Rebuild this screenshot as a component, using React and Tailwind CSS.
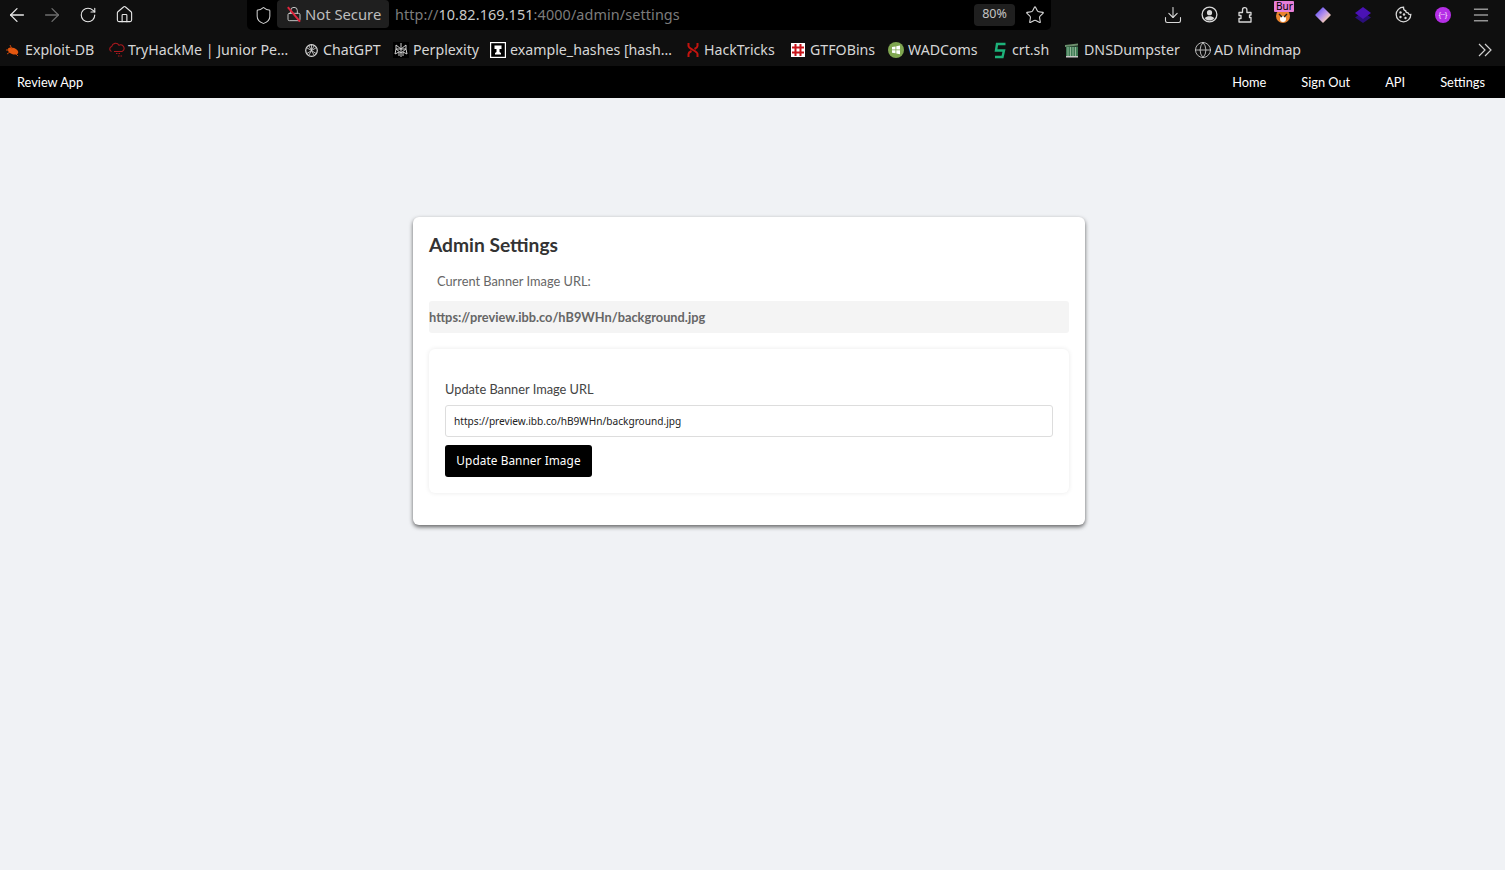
import React from "react";
import { ArrowLeft, ArrowRight, RotateCw, House, Shield, Lock, Star, Download, Menu, Globe } from "lucide-react";

function Bug() {
  return (
    <svg width="16" height="16" viewBox="0 0 16 16" className="shrink-0">
      <ellipse cx="8" cy="9" rx="5.500" ry="3.200" fill="#e4570f" transform="rotate(20 8 9)" />
      <path d="M1 8h3M2 12l3-2M5 3l2 4M11 12l2 2" stroke="#c9480c" strokeWidth="1" />
    </svg>
  );
}
function Thm() {
  return (
    <svg width="17" height="18" viewBox="0 0 17 18" fill="none" stroke="#a8181d" strokeWidth="1.100" className="shrink-0">
      <path d="M3.500 10.500a2.600 2.600 0 0 1 .2-5A4 4 0 0 1 11 4.200a3.200 3.200 0 0 1 3 6.300H6" />
      <path d="M8 12.500h5M10 15h4" strokeDasharray="1.500 1" />
    </svg>
  );
}
function Gpt() {
  return (
    <svg width="15" height="15" viewBox="0 0 15 15" fill="none" stroke="#d8d8d8" strokeWidth="1.200" className="shrink-0">
      <circle cx="7.500" cy="7.500" r="5.800" />
      <path d="M7.500 1.700v6l5 3M7.500 7.700l-5 3M2.500 4.600l5 3M12.500 4.600l-5 3M5 3l5 9M10 3l-5 9" strokeWidth="0.800" />
    </svg>
  );
}
function Perp() {
  return (
    <svg width="16" height="16" viewBox="0 0 16 16" fill="none" stroke="#cfcfcf" strokeWidth="1" className="shrink-0 bg-black">
      <path d="M8 1v14M3 3l5 4 5-4M3 3v4h10V3M3 7l-1 5 4-2v4M13 7l1 5-4-2v4M3 7l5 4 5-4" />
    </svg>
  );
}
function Wiki() {
  return (
    <svg width="16" height="16" viewBox="0 0 16 16" className="shrink-0">
      <rect x="0.500" y="0.500" width="15" height="15" fill="#000" stroke="#fff" strokeWidth="1.400" />
      <path d="M4.500 3.500h7v3.500H9.500v3l1.500 1v1.500H5V11l1.500-1V7H4.500z" fill="#fff" />
    </svg>
  );
}
function Hack() {
  return (
    <svg width="14" height="16" viewBox="0 0 14 16" fill="none" stroke="#c4140f" strokeWidth="2" className="shrink-0">
      <path d="M2.500 1v3c0 3 9 5 9 8v3M11.500 1v3c0 1-1 2-3 3M5.500 9c-2 1-3 2-3 3v3" />
    </svg>
  );
}
function Gtfo() {
  return (
    <svg width="14" height="14" viewBox="0 0 14 14" className="shrink-0">
      <rect width="14" height="14" fill="#fff" />
      <path d="M4.500 1v12M9.500 1v12M1 4.500h12M1 9.500h12" stroke="#c8141a" strokeWidth="2" />
    </svg>
  );
}
function Wad() {
  return (
    <svg width="16" height="16" viewBox="0 0 16 16" className="shrink-0">
      <circle cx="8" cy="8" r="8" fill="#7fa650" />
      <path d="M4 5l3.500-.6v3.100H4zM8.300 4.200L12 3.600v3.900H8.300zM4 8.300h3.500v3L4 10.800zM8.300 8.300H12v3.900l-3.700-.6z" fill="#fff" />
    </svg>
  );
}
function Crt() {
  return (
    <svg width="13" height="17" viewBox="0 0 13 17" fill="none" stroke="#1db27a" strokeWidth="2.400" className="shrink-0">
      <path d="M11.500 2H3L2 8.500h8L8.500 15H1" />
    </svg>
  );
}
function Dump() {
  return (
    <svg width="16" height="16" viewBox="0 0 16 16" className="shrink-0">
      <path d="M1 3l13-1.500v2L1 5z" fill="#6d8f6d" />
      <rect x="2" y="4.500" width="12" height="10" fill="#3f7a55" />
      <path d="M4 5v9M6.500 5v9M9 5v9M11.500 5v9" stroke="#9bbd9f" strokeWidth="0.900" />
      <rect x="2" y="14" width="12" height="1.500" fill="#c8c8c8" />
    </svg>
  );
}
function UserCircle() {
  return (
    <svg width="17" height="17" viewBox="0 0 17 17" fill="none" className="shrink-0">
      <circle cx="8.500" cy="8.500" r="7.400" stroke="#d8d8d8" strokeWidth="1.300" />
      <circle cx="8.500" cy="6.700" r="2.600" fill="#d8d8d8" />
      <path d="M3.800 12.300c1-1.500 2.700-2 4.700-2s3.700.5 4.700 2c-1 1.400-2.800 2.300-4.700 2.300s-3.700-.9-4.700-2.300z" fill="#d8d8d8" />
    </svg>
  );
}
function PuzzlePiece() {
  return (
    <svg width="15" height="17" viewBox="0 0 15 17" fill="none" stroke="#d8d8d8" strokeWidth="1.300" strokeLinejoin="round" className="shrink-0">
      <path d="M1 6.500h3.500V4a2.200 2.200 0 0 1 4.400-.3V6.500H13V9h-1.500v2.500H13V16H1v-3.500h2v-3H1z" />
    </svg>
  );
}
function CookieIcon() {
  return (
    <svg width="17" height="17" viewBox="0 0 17 17" className="shrink-0">
      <path d="M8.500 1.200a7.300 7.300 0 1 0 7.300 7.300c-1.500.2-2.400-.5-2.700-1.700-1.400 0-2.500-.8-2.500-2.200-1.400-.2-2.200-1.800-2.100-3.400z" fill="none" stroke="#d8d8d8" strokeWidth="1.300" />
      <circle cx="5.500" cy="6.500" r="1.200" fill="#d8d8d8" />
      <circle cx="9" cy="8.500" r="1.200" fill="#d8d8d8" />
      <circle cx="5.500" cy="11" r="1.200" fill="#d8d8d8" />
      <circle cx="10.500" cy="12" r="1.200" fill="#d8d8d8" />
    </svg>
  );
}

function Bookmark({ icon, label, gap, w }) {
  return (
    <div className={`flex items-center shrink-0 ${gap} ${w}`}>
      {icon}
      <span className="text-[14.200px] leading-none text-[#d6d6d6] whitespace-nowrap">{label}</span>
    </div>
  );
}

function Cell({ w = "w-[36px]", children }) {
  return <div className={`${w} h-[30px] flex items-center justify-center shrink-0`}>{children}</div>;
}

function Toolbar() {
  return (
    <div className="h-[30px] flex items-start shrink-0">
      <div className="w-[247px] h-[30px] flex items-center shrink-0 pb-[1px]">
        <Cell w="w-[34px]"><ArrowLeft size={22} color="#e6e6e6" strokeWidth={1.400} /></Cell>
        <Cell><ArrowRight size={22} color="#6f6f6f" strokeWidth={1.400} /></Cell>
        <Cell><RotateCw size={18} color="#e6e6e6" strokeWidth={1.500} /></Cell>
        <Cell><House size={19} color="#e6e6e6" strokeWidth={1.400} /></Cell>
      </div>
      <div className="w-[804px] h-[30px] bg-black rounded-b-[5px] flex items-center pl-[7px] shrink-0">
        <Shield size={19} color="#d0d0d0" strokeWidth={1.300} className="shrink-0" />
        <div className="relative ml-[4px] w-[112px] h-[28px] -mt-[3px] bg-[#1f1f1f] rounded-[4px] flex items-center pl-[9px] gap-[4px] shrink-0">
          <span className="relative w-[15px] h-[17px] mt-[2px] shrink-0">
            <Lock size={16} color="#d0d0d0" strokeWidth={1.400} />
            <span className="absolute left-[7px] -top-[1px] h-[19px] w-[1.500px] bg-[#e0263d] -rotate-[40deg]" />
          </span>
          <span className="text-[14.800px] text-[#bdbdbd] whitespace-nowrap pt-[1px]">Not Secure</span>
        </div>
        <div className="ml-[6px] text-[14.400px] tracking-[0.1px] whitespace-nowrap text-[#7c7c7c]">
          http://<span className="text-[#c8c8c8]">10.82.169.151</span>:4000/admin/settings
        </div>
        <div className="ml-auto h-[22px] w-[41px] bg-[#1f1f1f] rounded-[4px] flex items-center justify-center text-[12.500px] text-[#c4c4c4] -mt-[1px]">80%</div>
        <Star size={20} color="#d8d8d8" strokeWidth={1.300} className="ml-[10px] mr-[6px] shrink-0" />
      </div>
      <div className="flex-1 h-[30px] flex items-center pl-[104px] pb-[1px]">
        <Cell><Download size={20} color="#d8d8d8" strokeWidth={1.300} /></Cell>
        <Cell><UserCircle /></Cell>
        <Cell><PuzzlePiece /></Cell>
        <Cell w="w-[40px]">
          <span className="relative block w-[16px] h-[21px] -mt-[5px]">
            <svg width="16" height="16" viewBox="0 0 16 16" className="absolute left-0 top-[6px]">
              <circle cx="8" cy="8" r="7" fill="#e9842e" />
              <circle cx="8" cy="11" r="3" fill="#fff" />
              <path d="M4 6l3 3M12 6l-3 3" stroke="#222" strokeWidth="1.400" />
            </svg>
            <span className="absolute -left-[1px] -top-[1px] h-[11px] w-[20px] bg-[#e77fd8] text-[10px] leading-[11px] text-black pl-[2px] rounded-[1px] font-['Noto_Sans',sans-serif]">Bur</span>
          </span>
        </Cell>
        <Cell w="w-[40px]">
          <svg width="16" height="16" viewBox="0 0 16 16">
            <defs>
              <linearGradient id="dia" gradientUnits="userSpaceOnUse" x1="3" y1="3" x2="13" y2="13">
                <stop offset="0" stopColor="#6d5bf0" />
                <stop offset="0.500" stopColor="#b892ec" />
                <stop offset="1" stopColor="#fbd3ae" />
              </linearGradient>
            </defs>
            <path d="M8 1L15 8 8 15 1 8z" fill="url(#dia)" stroke="url(#dia)" strokeWidth="1.500" strokeLinejoin="round" />
          </svg>
        </Cell>
        <Cell w="w-[40px]">
          <svg width="16" height="16" viewBox="0 0 16 16">
            <path d="M8 5L16 10.500 8 16 0 10.500z" fill="#2b0f7a" />
            <path d="M8 0L16 6 8 12 0 6z" fill="#4a12b5" />
          </svg>
        </Cell>
        <Cell w="w-[40px]"><CookieIcon /></Cell>
        <Cell w="w-[40px]">
          <span className="w-[16px] h-[16px] rounded-full bg-[#b52ee6] flex items-center justify-center text-[7px] leading-none text-white">{"{··}"}</span>
        </Cell>
        <Cell><Menu size={20} color="#d8d8d8" strokeWidth={1.200} /></Cell>
      </div>
    </div>
  );
}

function BookmarksBar() {
  return (
    <div className="h-[36px] flex items-center pl-[5px] pt-[4px] shrink-0">
      <Bookmark icon={<Bug />} label="Exploit-DB" gap="gap-[4px]" w="w-[103px]" />
      <Bookmark icon={<Thm />} label="TryHackMe | Junior Pe…" gap="gap-[3px]" w="w-[196px]" />
      <Bookmark icon={<Gpt />} label="ChatGPT" gap="gap-[4px]" w="w-[89px]" />
      <Bookmark icon={<Perp />} label="Perplexity" gap="gap-[4px]" w="w-[97px]" />
      <Bookmark icon={<Wiki />} label="example_hashes [hash…" gap="gap-[4px]" w="w-[196px]" />
      <Bookmark icon={<Hack />} label="HackTricks" gap="gap-[4px]" w="w-[105px]" />
      <Bookmark icon={<Gtfo />} label="GTFOBins" gap="gap-[5px]" w="w-[97px]" />
      <Bookmark icon={<Wad />} label="WADComs" gap="gap-[4px]" w="w-[106px]" />
      <Bookmark icon={<Crt />} label="crt.sh" gap="gap-[5px]" w="w-[70px]" />
      <Bookmark icon={<Dump />} label="DNSDumpster" gap="gap-[4px]" w="w-[130px]" />
      <Bookmark icon={<Globe size={18} color="#d6d6d6" strokeWidth={1.100} />} label="AD Mindmap" gap="gap-[2px]" w="w-[110px]" />
      <svg width="14" height="14" viewBox="0 0 14 14" fill="none" stroke="#d0d0d0" strokeWidth="1.200" className="ml-auto mr-[13px] shrink-0">
        <path d="M1 1l6 6-6 6M7 1l6 6-6 6" />
      </svg>
    </div>
  );
}

function Nav() {
  return (
    <nav className="h-[32px] bg-black flex items-center justify-between pl-[17px] pr-[20px] pt-[1px] shrink-0 font-['Lato',sans-serif] text-[12.800px] text-white">
      <span>Review App</span>
      <div className="flex items-center gap-[35px]">
        <span>Home</span>
        <span>Sign Out</span>
        <span>API</span>
        <span>Settings</span>
      </div>
    </nav>
  );
}

export default function App() {
  return (
    <div className="h-[870px] overflow-hidden flex flex-col bg-[#0f0f0f] font-['Noto_Sans',sans-serif]">
      <Toolbar />
      <BookmarksBar />
      <Nav />
      <main className="flex-1 bg-[#f0f2f5] flex justify-center pt-[119px] pr-[7px] font-['Lato',sans-serif]">
        <section className="w-[672px] h-[308px] bg-white rounded-[6px] shadow-[0_2px_4px_rgba(0,0,0,0.6)] px-[16px] pt-[16px]">
          <h2 className="text-[19.200px] leading-[24px] font-bold text-[#333333]">Admin Settings</h2>
          <p className="mt-[16px] ml-[8px] text-[12.800px] leading-[16px] text-[#666666]">Current Banner Image URL:</p>
          <div className="mt-[12px] h-[32px] bg-[#f4f4f4] rounded-[3px] flex items-center pt-[1px] text-[12.800px] font-bold text-[#666666]">
            https://preview.ibb.co/hB9WHn/background.jpg
          </div>
          <div className="mt-[16px] h-[144px] rounded-[6px] bg-white shadow-[0_0_5px_rgba(0,0,0,0.09)] px-[16px] pt-[32px]">
            <label className="block text-[12.800px] leading-[16px] text-[#444444]">Update Banner Image URL</label>
            <input
              readOnly
              value="https://preview.ibb.co/hB9WHn/background.jpg"
              className="block mt-[8px] w-full h-[32px] rounded-[3px] border border-[#dddddd] bg-white pl-[8px] text-[10.150px] text-[#222222] outline-none font-['Noto_Sans',sans-serif]"
            />
            <button className="block mt-[8px] w-[147px] h-[32px] rounded-[3px] bg-black text-white text-[11.800px] tracking-[0.080px] font-['Noto_Sans',sans-serif]">
              Update Banner Image
            </button>
          </div>
        </section>
      </main>
    </div>
  );
}
